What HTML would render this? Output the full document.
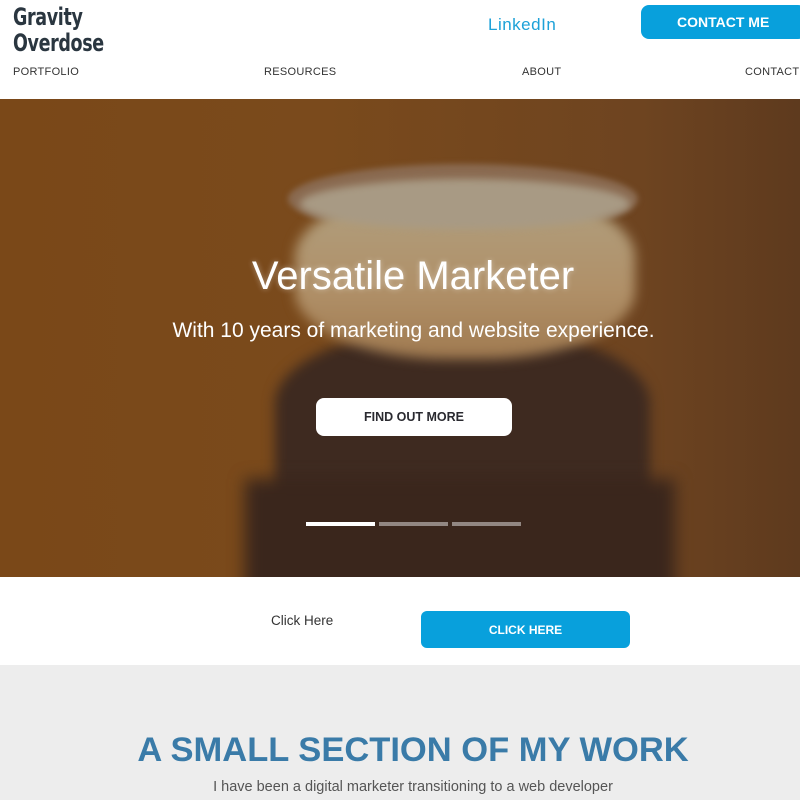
<!DOCTYPE html>
<html><head><style>
*{margin:0;padding:0;box-sizing:border-box}
body{width:800px;height:800px;overflow:hidden;font-family:"Liberation Sans",Arial,sans-serif;background:#fff;position:relative}
.a{position:absolute}
</style></head><body>
<div class="a" style="left:13px;top:4px;font-family:'DejaVu Sans','Liberation Sans',sans-serif;font-weight:bold;font-size:24px;line-height:26px;color:#2a3640;letter-spacing:-0.5px;transform:scaleX(0.73);transform-origin:0 0">Gravity<br>Overdose</div>
<div class="a" style="left:488px;top:15px;font-size:17px;color:#1da1d8;letter-spacing:0.5px">LinkedIn</div>
<div class="a" style="left:641px;top:5px;width:165px;height:34px;background:#08a0dc;border-radius:8px;color:#fff;font-weight:bold;font-size:14px;line-height:34px;padding-left:36px">CONTACT ME</div>
<div class="a" style="top:66px;left:13px;font-size:11px;color:#333;letter-spacing:0.3px">PORTFOLIO</div>
<div class="a" style="top:66px;left:264px;font-size:11px;color:#333;letter-spacing:0.3px">RESOURCES</div>
<div class="a" style="top:66px;left:522px;font-size:11px;color:#333;letter-spacing:0.3px">ABOUT</div>
<div class="a" style="top:66px;left:745px;font-size:11px;color:#333;letter-spacing:0.3px">CONTACT</div>

<div class="a" style="left:0;top:99px;width:800px;height:478px;overflow:hidden;background:linear-gradient(90deg,#7a4818 0%,#7a4a1c 40%,#6e4420 80%,#5e3a1e 100%)">
  <div class="a" style="left:275px;top:230px;width:375px;height:300px;background:#3e2a20;border-radius:45% 45% 0 0/25% 25% 0 0;filter:blur(6px)"></div>
  <div class="a" style="left:245px;top:380px;width:430px;height:120px;background:#3a261c;filter:blur(8px)"></div>
  <div class="a" style="left:288px;top:65px;width:350px;height:70px;border-radius:50%;background:#8a6a50;filter:blur(3px)"></div>
  <div class="a" style="left:295px;top:90px;width:340px;height:170px;border-radius:45%/40%;background:linear-gradient(#b0a080,#b09068 60%,#a07a50);filter:blur(6px)"></div>
  <div class="a" style="left:300px;top:80px;width:330px;height:50px;border-radius:50%;background:#a89a84;filter:blur(4px)"></div>
  <div class="a" style="left:0;top:155px;width:800px;text-align:center;color:#fff;font-size:40px;padding-left:26px;text-shadow:0 0 6px rgba(255,255,255,.4)">Versatile Marketer</div>
  <div class="a" style="left:0;top:220px;width:800px;text-align:center;color:#fff;font-size:21px;padding-left:27px">With 10 years of marketing and website experience.</div>
  <div class="a" style="left:316px;top:299px;width:196px;height:38px;background:#fff;border-radius:8px;text-align:center;line-height:38px;font-size:12.5px;font-weight:bold;color:#2a2a30">FIND OUT MORE</div>
  <div class="a" style="left:306px;top:423px;width:69px;height:4px;background:#fff"></div>
  <div class="a" style="left:379px;top:423px;width:69px;height:4px;background:rgba(255,255,255,.45)"></div>
  <div class="a" style="left:452px;top:423px;width:69px;height:4px;background:rgba(255,255,255,.45)"></div>
</div>

<div class="a" style="left:271px;top:613px;font-size:13.5px;color:#333">Click Here</div>
<div class="a" style="left:421px;top:611px;width:209px;height:37px;background:#08a0dc;border-radius:6px;color:#fff;font-weight:bold;font-size:12px;text-align:center;line-height:39px">CLICK HERE</div>

<div class="a" style="left:0;top:665px;width:800px;height:135px;background:#ededed">
  <div class="a" style="left:0;top:66px;width:826px;text-align:center;font-size:34.5px;font-weight:bold;color:#3a7ba8">A SMALL SECTION OF MY WORK</div>
  <div class="a" style="left:0;top:114px;width:826px;text-align:center;font-size:14.5px;color:#555">I have been a digital marketer transitioning to a web developer</div>
</div>
</body></html>
